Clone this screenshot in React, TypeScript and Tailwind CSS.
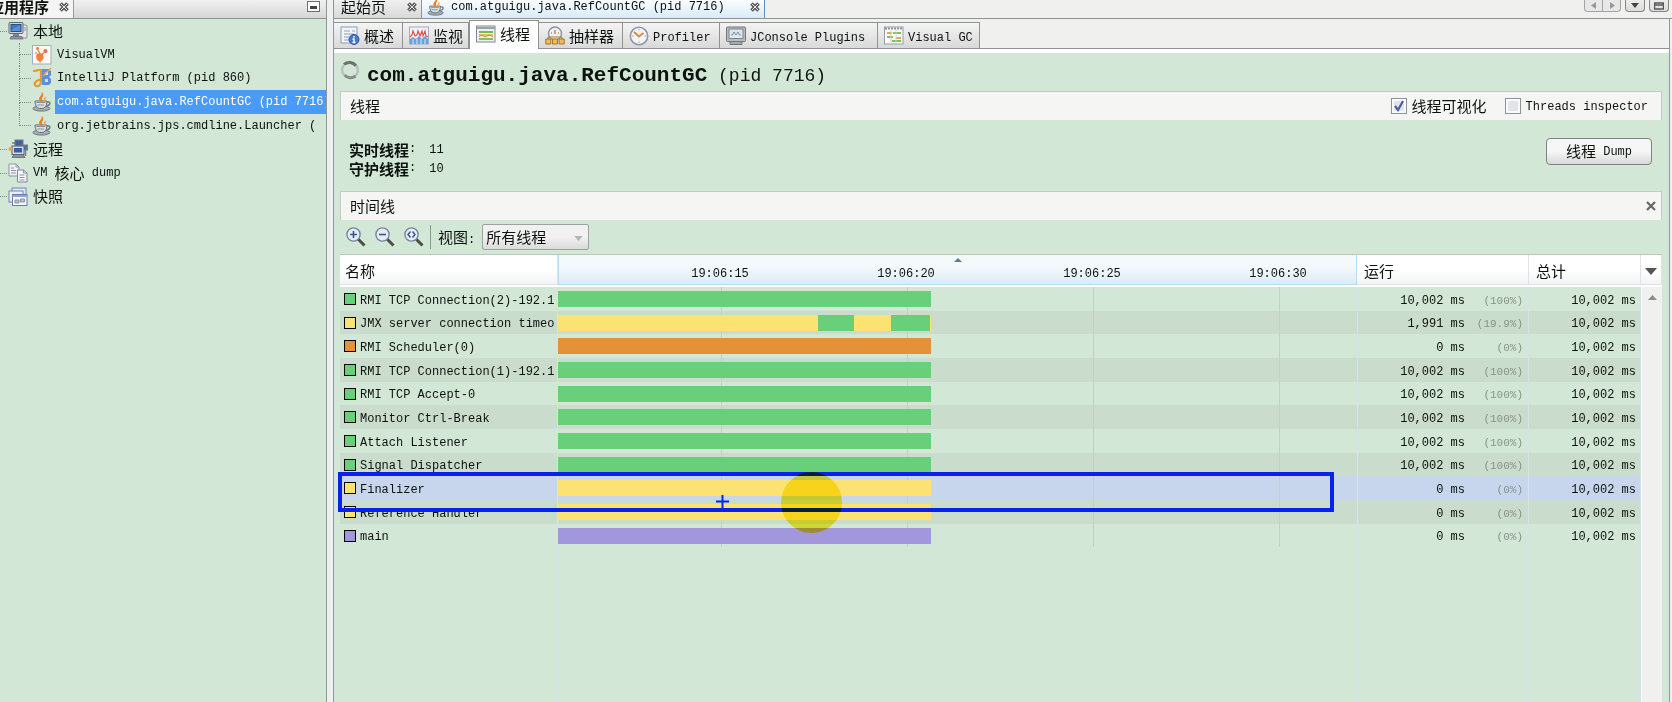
import React from "react";

const latin = "font-['Liberation_Mono','Noto_Sans_CJK_SC',monospace] text-[12px]";
const cjk = "font-['Noto_Sans_CJK_SC',sans-serif] text-[15px]";

type IconProps = { className?: string };

function Svg({ children, className = "size-5" }: IconProps & { children: React.ReactNode }) {
  return (
    <svg viewBox="0 0 20 20" fill="none" aria-hidden="true" className={`${className} shrink-0`}>
      {children}
    </svg>
  );
}

function ComputerIcon() {
  return (
    <Svg>
      <rect x="9" y="4" width="10" height="13" rx="1" fill="#e4e6ea" stroke="#8b929c" />
      <path d="M16 7h2M16 9h2" stroke="#8b929c" />
      <rect x="1" y="1.500" width="14" height="11" rx="1" fill="#c9d0d8" stroke="#5f6a78" />
      <rect x="3" y="3.500" width="10" height="7" fill="#3f78bd" stroke="#24528f" />
      <path d="M3.500 9 12 4v6H3.500z" fill="#6ea2db" opacity=".6" />
      <path d="M6 13h4l1 2H5zM3 15.500h11l1 2.500H2z" fill="#8f969f" stroke="#646b75" strokeWidth=".8" />
    </Svg>
  );
}

function VisualVmIcon() {
  return (
    <Svg>
      <rect x=".5" y=".5" width="18.500" height="18.500" fill="#fbf7f3" stroke="#a5aec4" />
      <path d="M5 9c2-1 5-1 6 1s1 4-1 5.500-5 .5-5.500-2S4 10 5 9z" fill="#f0803c" />
      <circle cx="5.500" cy="3.500" r="1.400" fill="#f0803c" />
      <circle cx="13.500" cy="6" r="2" fill="#ee6a4a" />
      <circle cx="4" cy="8" r="1.100" fill="#f4a06c" />
      <path d="m5.500 4 2.500 5M9.500 10l4-4M8 15v2.500" stroke="#ee7a3c" strokeWidth="1.300" />
    </Svg>
  );
}

function IntellijIcon() {
  return (
    <Svg>
      <path d="M10 1h7l2 2v4l-2 2 2 2v4l-2 2h-7z" fill="#5f8fdb" />
      <path d="M13 4h3v3h-3zM13 11h3v3h-3z" fill="#d6e7dc" />
      <path d="M2 3c2 0 6-2 7-1v10c0 5-2 7-5 6-3-2-1-5 5-7" stroke="#e6992f" strokeWidth="2.200" strokeLinecap="round" />
      <path d="m19 0-8 8" stroke="#e6a94a" strokeWidth="1.500" />
    </Svg>
  );
}

function JavaIcon({ className }: IconProps) {
  return (
    <Svg className={className}>
      <ellipse cx="9.500" cy="16.500" rx="8.500" ry="2.600" fill="#a4acb2" stroke="#6c777f" />
      <path d="M3 9h12c0 5-2 7.500-6 7.500S3 14 3 9z" fill="#d9dee1" stroke="#5f6b75" />
      <path d="M15 10c4-1 4 3.500-1 4" stroke="#6f7b85" strokeWidth="1.500" />
      <path d="M4.500 10.500h9M5 13h7" stroke="#8b97a0" />
      <path d="M9 10C3.500 6 11 4 9.500 0c4.500 3-1 5 1 10z" fill="#ec8222" />
      <path d="M11.500 9.500c-1-2 1.500-3 1.500-5.500 2.500 2.500-.5 3.500-.5 5.500z" fill="#f0a455" />
    </Svg>
  );
}

function RemoteIcon() {
  return (
    <Svg>
      <rect x="7" y="1" width="8" height="6" fill="#3d64a0" stroke="#757b83" />
      <rect x="13.500" y="6" width="6" height="5" fill="#5577a8" stroke="#757b83" />
      <rect x="4" y="7" width="12" height="8.500" fill="#d5d9df" stroke="#5d646e" />
      <rect x="6" y="9" width="8" height="4.500" fill="#355fa2" />
      <path d="M4 18.500h13l-2-3H6z" fill="#8b9199" stroke="#60666f" strokeWidth=".8" />
      <circle cx="2.500" cy="10" r="2" fill="#e9a53a" />
      <path d="M4 4h3M17.500 11v6" stroke="#777e87" strokeWidth="1.500" />
    </Svg>
  );
}

function DumpIcon() {
  return (
    <Svg>
      <path d="M1 1h7l3 3v9H1z" fill="#f1f2f6" stroke="#8c93a5" />
      <path d="M8 1v3h3M3 5h3M3 7.500h5M3 10h5" stroke="#8c93a5" />
      <path d="M9.500 7h6l3.500 3v9H9.500z" fill="#f5f6fa" stroke="#7f879c" />
      <path d="M15.500 7v3H19M11.500 12h5M11.500 14.500h5M11.500 17h5" stroke="#8c93a5" />
    </Svg>
  );
}

function SnapshotIcon() {
  return (
    <Svg>
      <rect x="4" y="1" width="14" height="11" fill="#dfe6f4" stroke="#7186b2" />
      <rect x="1" y="4" width="14" height="11" fill="#e9eef8" stroke="#7186b2" />
      <rect x="4.500" y="7.500" width="14.500" height="11" fill="#f6f8fc" stroke="#667ba9" />
      <path d="M4.500 9h14.500" stroke="#91a5cf" strokeWidth="2" />
      <path d="M7 16v-3h4v3zM12.500 15v-3h4v3z" fill="#b4bfd5" stroke="#8794b0" />
    </Svg>
  );
}

function OverviewIcon() {
  return (
    <Svg>
      <rect x="1" y="1" width="16" height="16" fill="#f1f4f8" stroke="#8b9bb0" />
      <path d="M4 5h6M4 8h10M4 11h5M4 14h5M12 5h3" stroke="#8fa3bf" />
      <circle cx="14" cy="13.500" r="5" fill="#4a78c8" stroke="#2c559f" />
      <path d="M14 10v1.500M12.500 13H14v3.500M12.500 16.500h3" stroke="#fff" strokeWidth="1.400" />
    </Svg>
  );
}

function MonitorIcon() {
  return (
    <Svg>
      <rect x=".5" y="1" width="19" height="17" fill="#eef3fa" stroke="#9fabc0" />
      <path d="M1 18v-5l3-2 3 2 3-3 3 3 3-3 3 3v5z" fill="#6d9fe0" />
      <path d="m1 11 2-2 1-4 2 5 2-1 1-4 2 5 2-5 1 5 2-5 1 5 2 1" stroke="#e0524a" strokeWidth="1.200" />
      <path d="M4 13v5M8 13v5M12 13v5M16 13v5" stroke="#d9e7f8" />
    </Svg>
  );
}

function ThreadsIcon() {
  return (
    <Svg>
      <rect x=".5" y="2" width="18.500" height="16" fill="#eef0ee" stroke="#7f8893" />
      <path d="M1 4h18" stroke="#98a3b2" strokeWidth="2" />
      <path d="M3 8h14" stroke="#6fbd5c" strokeWidth="2" />
      <path d="M3 11h14" stroke="#ecc14f" strokeWidth="2" />
      <path d="M3 12.500 6 11l3 2 4-2 4 1.500" stroke="#d8824a" />
      <path d="M3 15h14" stroke="#7cc46c" strokeWidth="2" />
    </Svg>
  );
}

function SamplerIcon() {
  return (
    <Svg>
      <circle cx="10" cy="7.500" r="6.500" fill="#eef1f5" stroke="#8d949e" strokeWidth="1.400" />
      <path d="M10 4v4M6 7h1M13 7h1" stroke="#c38b3c" strokeWidth="1.500" />
      <path d="M3 13v-2h14v2" stroke="#a77b30" />
      <path d="M.8 13h5v5h-5zM7.500 13h5v5h-5zM14.200 13h5v5h-5z" fill="#f0bd5c" stroke="#a77623" />
    </Svg>
  );
}

function ProfilerIcon() {
  return (
    <Svg>
      <circle cx="10" cy="10" r="8.700" fill="#f1f4f8" stroke="#8f98a5" strokeWidth="1.600" />
      <path d="M10 3v1.500M10 15.500V17M3 10h1.500M15.500 10H17" stroke="#9aa3b0" />
      <path d="m5 6 5 4.500L14.500 7" stroke="#e28b3d" strokeWidth="2" />
    </Svg>
  );
}

function JConsoleIcon() {
  return (
    <Svg>
      <rect x=".5" y="1" width="19" height="14.500" rx="1" fill="#b9bdc1" stroke="#70777e" />
      <rect x="3" y="3" width="14" height="9.500" fill="#dde6ec" stroke="#7d858d" />
      <path d="M5 9h1.500l1.500-3 2 3 2-3 1.500 3H15" stroke="#7890a4" />
      <path d="M4 15.500h12v3H4z" fill="#a5aaaf" stroke="#70777e" />
    </Svg>
  );
}

function VisualGcIcon() {
  return (
    <Svg>
      <rect x=".5" y="1" width="18.500" height="17" fill="#fbfbf8" stroke="#979da6" />
      <path d="M1 2.500h18" stroke="#8794a8" strokeWidth="2" strokeDasharray="2 1" />
      <path d="M3 7h5M12 12h5" stroke="#e7a844" strokeWidth="1.800" />
      <path d="M9 7h8M3 11h6M8 15h9" stroke="#7fc063" strokeWidth="1.800" />
      <path d="M7 4v13M12 4v13" stroke="#cfd7c9" />
    </Svg>
  );
}

function Magnifier({ kind }: { kind: "in" | "out" | "fit" }) {
  return (
    <Svg>
      <path d="m12 12 6.500 6.500" stroke="#4b4f42" strokeWidth="3" />
      <circle cx="7.500" cy="7.500" r="6.600" fill="#e6edfa" stroke="#7884a0" strokeWidth="1.400" />
      {kind === "in" && <path d="M4 7.500h7M7.500 4v7" stroke="#3f557f" strokeWidth="1.600" />}
      {kind === "out" && <path d="M4 7.500h7" stroke="#3f557f" strokeWidth="1.600" />}
      {kind === "fit" && <path d="M6.500 4.500 4 7.500l2.500 3M8.500 4.500l2.500 3-2.500 3" stroke="#3f557f" strokeWidth="1.500" />}
    </Svg>
  );
}

function BoxedCross() {
  return (
    <svg viewBox="0 0 10 10" aria-hidden="true" className="size-[10px]" fill="none">
      <path d="m1.500 1.500 7 7M8.500 1.500l-7 7" stroke="#5a5a5a" strokeWidth="3.800" />
      <path d="m2 2 6 6M8 2 2 8" stroke="#e8e8e8" strokeWidth="1" />
    </svg>
  );
}

type Part = { text: string; cjk?: boolean };
type TreeNode = { id: string; level: number; icon: React.ReactNode; parts: Part[]; selected?: boolean; last?: boolean };

const tree: TreeNode[] = [
  { id: "local", level: 0, icon: <ComputerIcon />, parts: [{ text: "本地", cjk: true }] },
  { id: "vvm", level: 1, icon: <VisualVmIcon />, parts: [{ text: "VisualVM" }] },
  { id: "idea", level: 1, icon: <IntellijIcon />, parts: [{ text: "IntelliJ Platform (pid 860)" }] },
  { id: "gc", level: 1, icon: <JavaIcon />, parts: [{ text: "com.atguigu.java.RefCountGC (pid 7716)" }], selected: true },
  { id: "jps", level: 1, icon: <JavaIcon />, parts: [{ text: "org.jetbrains.jps.cmdline.Launcher (" }], last: true },
  { id: "remote", level: 0, icon: <RemoteIcon />, parts: [{ text: "远程", cjk: true }] },
  { id: "dump", level: 0, icon: <DumpIcon />, parts: [{ text: "VM " }, { text: "核心", cjk: true }, { text: " dump" }] },
  { id: "snap", level: 0, icon: <SnapshotIcon />, parts: [{ text: "快照", cjk: true }] },
];

function Sidebar() {
  return (
    <aside className="flex w-[327px] shrink-0 flex-col overflow-hidden border-r border-[#8e9692] bg-[#d3e7d6]">
      <div className="flex h-[19px] shrink-0 items-stretch justify-between border-b border-[#8f9391] bg-linear-to-b from-[#f1f1f1] to-[#d6d6d6]">
        <div className="flex w-[74px] items-center gap-[10px] border-r border-[#9c9c9c] bg-[#f4f4f4] pb-1">
          <span className={`${cjk} -ml-[11px] leading-[14px] font-bold whitespace-nowrap`}>应用程序</span>
          <button aria-label="关闭" className="shrink-0"><BoxedCross /></button>
        </div>
        <button aria-label="最小化" className="mt-px mr-[6px] flex h-[11px] w-[13px] items-end justify-center border border-[#6f6f6f] bg-white pb-[2px]">
          <span className="h-[3px] w-[7px] bg-[#444]" />
        </button>
      </div>
      <ul>
        {tree.map((n) => (
          <li key={n.id} className="flex h-6 items-center whitespace-nowrap nth-[3n+2]:h-[23px]">
            {n.level === 0 ? (
              <span className="mr-px w-[7px] shrink-0 border-t border-dotted border-[#7d8a80]" />
            ) : (
              <span className="mr-px ml-[19px] flex w-[12px] shrink-0 flex-col self-stretch">
                <span className="flex-1 border-b border-l border-dotted border-[#7d8a80]" />
                <span className={n.last ? "flex-1" : "flex-1 border-l border-dotted border-[#7d8a80]"} />
              </span>
            )}
            {n.icon}
            <span
              className={
                n.selected
                  ? "ml-[3px] flex min-w-0 flex-1 items-center self-stretch bg-[#4a9bf9] pl-[2px] text-white"
                  : "ml-[5px] flex items-center text-[#0c120e]"
              }
            >
              {n.parts.map((p) => (
                <span key={p.text} className={`${p.cjk ? cjk : latin} whitespace-pre`}>{p.text}</span>
              ))}
            </span>
          </li>
        ))}
      </ul>
    </aside>
  );
}

const tabs = [
  { label: "概述", cjk: true, width: "w-[69px]", icon: <OverviewIcon /> },
  { label: "监视", cjk: true, width: "w-[66px]", icon: <MonitorIcon /> },
  { label: "线程", cjk: true, width: "w-[70px]", icon: <ThreadsIcon />, active: true },
  { label: "抽样器", cjk: true, width: "w-[84px]", icon: <SamplerIcon /> },
  { label: "Profiler", width: "w-[97px]", icon: <ProfilerIcon /> },
  { label: "JConsole Plugins", width: "w-[158px]", icon: <JConsoleIcon /> },
  { label: "Visual GC", width: "w-[102px]", icon: <VisualGcIcon /> },
];

const windowButton =
  "flex h-[12px] w-5 items-center justify-center rounded-b-[4px] border border-t-0 border-[#858585] bg-linear-to-b from-[#ececec] to-[#dcdcdc]";

function DocumentTabs() {
  return (
    <div className="flex h-[19px] shrink-0 items-stretch border-b border-[#8f9391] bg-[#f0f0ef]">
      <div className="flex w-[89px] items-center justify-between border-r border-l border-[#8f9391] bg-linear-to-b from-[#f0f0f0] to-[#d9d9d9] pr-1 pb-[5px] pl-[7px]">
        <button className={`${cjk} leading-[14px] whitespace-nowrap`}>起始页</button>
        <button aria-label="关闭起始页"><BoxedCross /></button>
      </div>
      <div className="flex w-[343px] items-center border-r border-[#5f8fc0] bg-linear-to-b from-[#fbfdff] to-[#d9eaf7] pr-1 pb-[4px] pl-[5px]">
        <JavaIcon className="size-[18px]" />
        <button className={`${latin} ml-[6px] flex-1 text-left leading-[14px] whitespace-nowrap`}>com.atguigu.java.RefCountGC (pid 7716)</button>
        <button aria-label="关闭"><BoxedCross /></button>
      </div>
      <div className="ml-auto flex gap-1 pr-[3px]">
        <div className="flex">
          <button aria-label="向左" className="flex h-[12px] w-[19px] items-center justify-center rounded-bl-[4px] border border-t-0 border-[#a2a2a2] bg-[#e8e8e8]">
            <svg viewBox="0 0 8 8" className="size-2"><path d="M6 0v7L1 3.500z" fill="#999" /></svg>
          </button>
          <button aria-label="向右" className="flex h-[12px] w-[18px] items-center justify-center rounded-br-[4px] border border-t-0 border-l-0 border-[#a2a2a2] bg-[#e8e8e8]">
            <svg viewBox="0 0 8 8" className="size-2"><path d="M2 0v7l5-3.500z" fill="#999" /></svg>
          </button>
        </div>
        <button aria-label="文档列表" className={windowButton}>
          <svg viewBox="0 0 8 5" className="h-[5px] w-2"><path d="M0 0h8L4 5z" fill="#444" /></svg>
        </button>
        <button aria-label="最大化" className={windowButton}>
          <svg viewBox="0 0 10 8" className="h-2 w-[10px]" fill="none"><path d="M.5 1h9v6h-9zM0 3h10" stroke="#555" strokeWidth="1.400" /></svg>
        </button>
      </div>
    </div>
  );
}

function ViewTabs() {
  return (
    <div className="flex h-[30px] shrink-0 items-end border-b border-[#8f9391] bg-[#f0f0ef]">
      {tabs.map((t) => (
        <button
          key={t.label}
          className={
            t.active
              ? `${t.width} -mb-px flex h-[29px] items-center gap-[4px] border border-b-0 border-[#8f9391] bg-white pb-[2px] pl-[6px] whitespace-nowrap`
              : `${t.width} flex h-[26px] items-center gap-[4px] border border-b-0 border-l-0 border-[#8f9391] bg-linear-to-b from-[#f4f4f4] to-[#d9d9d9] pl-[6px] whitespace-nowrap`
          }
        >
          {t.icon}
          <span className={`${t.cjk ? `${cjk} leading-5` : `${latin} pt-1 leading-5`}`}>{t.label}</span>
        </button>
      ))}
    </div>
  );
}

function CheckOption({ label, isCjk, checked }: { label: string; isCjk?: boolean; checked?: boolean }) {
  return (
    <label className="flex items-center gap-[5px]">
      <span className="relative flex size-4">
        <input
          type="checkbox"
          defaultChecked={checked}
          className="peer size-4 appearance-none border border-[#8d9399] bg-[#e1e4e8] shadow-[inset_0_0_0_2px_#fafafa]"
        />
        <svg viewBox="0 0 16 16" fill="none" className="pointer-events-none absolute inset-0 hidden peer-checked:block">
          <path d="m4 8 3 4 5-9" stroke="#4a5f9f" strokeWidth="2.200" />
        </svg>
      </span>
      <span className={`${isCjk ? cjk : `${latin} pt-[2px]`} whitespace-nowrap`}>{label}</span>
    </label>
  );
}

type Seg = { w: number; c: string };
type Thread = { name: string; swatch: string; segs: Seg[]; run: string; pct: string; selected?: boolean };

const GREEN = "#69cf78";
const YELLOW = "#fbe272";
const ORANGE = "#e39237";
const PURPLE = "#a296dc";
const TOTAL = "10,002 ms";
const SPAN = 373;

const solid = (name: string, c: string, run = TOTAL, pct = "(100%)"): Thread => ({ name, swatch: c, segs: [{ w: SPAN, c }], run, pct });

const threads: Thread[] = [
  solid("RMI TCP Connection(2)-192.1", GREEN),
  {
    name: "JMX server connection timeo",
    swatch: YELLOW,
    segs: [{ w: 260, c: YELLOW }, { w: 36, c: GREEN }, { w: 37, c: YELLOW }, { w: 39, c: GREEN }, { w: 1, c: YELLOW }],
    run: "1,991 ms",
    pct: "(19.9%)",
  },
  solid("RMI Scheduler(0)", ORANGE, "0 ms", "(0%)"),
  solid("RMI TCP Connection(1)-192.1", GREEN),
  solid("RMI TCP Accept-0", GREEN),
  solid("Monitor Ctrl-Break", GREEN),
  solid("Attach Listener", GREEN),
  solid("Signal Dispatcher", GREEN),
  { ...solid("Finalizer", YELLOW, "0 ms", "(0%)"), selected: true },
  solid("Reference Handler", YELLOW, "0 ms", "(0%)"),
  solid("main", PURPLE, "0 ms", "(0%)"),
];

const ticks = ["19:06:15", "19:06:20", "19:06:25", "19:06:30"];

const headCell = "border-r border-b border-[#dfe3e6] bg-linear-to-b from-white from-50% to-[#f3f4f6] p-0 text-left font-normal";

function ThreadTable() {
  return (
    <div className="relative mr-[7px] ml-[6px] flex-1">
      <table className={`${latin} h-full w-full table-fixed border-separate border-spacing-0 border-t border-[#bcc6bd] text-[#0c120e]`}>
        <colgroup>
          <col className="w-[218px]" />
          <col />
          <col className="w-[172px]" />
          <col className="w-[112px]" />
          <col className="w-[21px]" />
        </colgroup>
        <thead>
          <tr className="h-[30px]">
            <th className={`${headCell} ${cjk} pt-1 pl-[5px]`}>名称</th>
            <th className="relative overflow-hidden border-r border-b border-l border-[#b5def5] bg-linear-to-b from-[#f4f9fc] from-40% to-[#dcebf6] p-0 font-normal">
              <svg viewBox="0 0 8 4" className="absolute top-[3px] left-1/2 -ml-1 h-1 w-2"><path d="M0 4h8L4 0z" fill="#55809a" /></svg>
              <div className="flex overflow-hidden pt-2 pl-[68px]">
                {ticks.map((t) => (
                  <span key={t} className="w-[186px] shrink-0 text-center">{t}</span>
                ))}
              </div>
            </th>
            <th className={`${headCell} ${cjk} pt-1 pl-[7px]`}>运行</th>
            <th className={`${headCell} ${cjk} pt-1 pl-[7px]`}>总计</th>
            <th className={headCell}>
              <button aria-label="选择列" className="flex w-full justify-center pt-1">
                <svg viewBox="0 0 12 7" className="h-[7px] w-3"><path d="M0 0h12L6 7z" fill="#555" /></svg>
              </button>
            </th>
          </tr>
        </thead>
        <tbody>
          <tr className="h-[2px]">
            <td colSpan={5} className="bg-white p-0" />
          </tr>
          {threads.map((t, i) => {
            const bg = t.selected ? "bg-[#c7d6ec]" : i % 2 ? "bg-[#cadccb]" : "bg-[#d3e7d6]";
            return (
              <tr key={t.name} className={`${bg} h-6 nth-[3n]:h-[23px]`}>
                <td className="border-r border-[#d6e2ea] p-0">
                  <div className="flex items-center gap-[4px] overflow-hidden pl-1 leading-5 whitespace-nowrap">
                    <span className="size-3 shrink-0 border border-black" style={{ backgroundColor: t.swatch }} />
                    <span className="pt-[3px]">{t.name}</span>
                  </div>
                </td>
                <td className="relative overflow-hidden p-0">
                  <div className="absolute inset-0 flex overflow-hidden pl-[70px]">
                    {ticks.map((k) => (
                      <span key={k} className="flex w-[186px] shrink-0 justify-center">
                        <span className="w-px bg-[#c3d1c5]" />
                      </span>
                    ))}
                  </div>
                  <div className="relative flex h-4">
                    {t.segs.map((s, j) => (
                      <span key={j} style={{ width: s.w, backgroundColor: s.c }} />
                    ))}
                  </div>
                </td>
                <td className="border-x border-[#d6e2ea] p-0">
                  <div className="flex items-center justify-end pt-[3px] pr-[5px] leading-5">
                    <span>{t.run}</span>
                    <span className="w-[58px] text-right text-[11px] text-[#87938a]">{t.pct}</span>
                  </div>
                </td>
                <td className="border-r border-[#d6e2ea] p-0 pt-[3px] pr-1 text-right leading-5">{TOTAL}</td>
                {i === 0 && (
                  <td rowSpan={threads.length + 1} className="border-l border-white bg-[#f0f0ef] p-0 align-top">
                    <button aria-label="向上滚动" className="flex w-full justify-center pt-2">
                      <svg viewBox="0 0 9 5" className="h-[5px] w-[9px]"><path d="M0 5h9L4.500 0z" fill="#8c8c8c" /></svg>
                    </button>
                  </td>
                )}
              </tr>
            );
          })}
          <tr>
            <td className="border-r border-[#d6e2ea] p-0" />
            <td className="p-0" />
            <td className="border-x border-[#d6e2ea] p-0" />
            <td className="border-r border-[#d6e2ea] p-0" />
          </tr>
        </tbody>
      </table>
      <div className="pointer-events-none absolute top-[218px] -left-[2px] h-[40px] w-[996px] border-4 border-[#0722ec]" />
      <svg viewBox="0 0 13 13" className="pointer-events-none absolute top-[241px] left-[376px] size-[13px]">
        <path d="M6.500 0v13M0 6.500h13" stroke="#0722ec" strokeWidth="2" />
      </svg>
      <div className="pointer-events-none absolute top-[218px] left-[441px] size-[61px] rounded-full bg-[#fbee3e] mix-blend-multiply" />
    </div>
  );
}

const sectionBar = "mr-[7px] ml-[6px] flex h-[29px] shrink-0 items-center border border-b-0 border-[#c3ccc4] bg-[#f5f5f4] pl-[9px]";

export default function App() {
  return (
    <div className={`${latin} flex h-screen min-h-[560px] overflow-hidden bg-[#eef0ef] text-[#0c120e]`}>
      <Sidebar />
      <main className="ml-[6px] flex min-w-0 flex-1 flex-col">
        <DocumentTabs />
        <div className="mr-[2px] flex min-h-0 flex-1 flex-col border-x border-[#8f9aa0] bg-[#d3e7d6]">
          <ViewTabs />
          <div className="h-1 shrink-0 bg-white" />
          <h1 className="flex h-[38px] shrink-0 items-center pl-[6px] whitespace-pre">
            <svg viewBox="0 0 20 20" fill="none" className="mb-1 size-5">
              <path d="M4 4.500a8 8 0 0 1 12 1.500" stroke="#6d716d" strokeWidth="3" />
              <path d="M16.500 5.500a8 8 0 0 1-2 11" stroke="#b9bfba" strokeWidth="2.500" />
              <path d="M15.500 16a8 8 0 0 1-11-1" stroke="#878c88" strokeWidth="3" />
              <path d="M4 15a8 8 0 0 1 0-10" stroke="#b9bfba" strokeWidth="2.500" />
            </svg>
            <span className="ml-[7px] flex items-baseline pt-2">
              <span className="text-[21px] font-bold">com.atguigu.java.RefCountGC</span>
              <span className="text-[18px]"> (pid 7716)</span>
            </span>
          </h1>
          <section className={sectionBar}>
            <h2 className={cjk}>线程</h2>
            <div className="ml-auto flex gap-[18px] pr-[13px]">
              <CheckOption label="线程可视化" isCjk checked />
              <CheckOption label="Threads inspector" />
            </div>
          </section>
          <div className="flex h-[71px] shrink-0 items-start justify-between pr-[17px] pl-[15px]">
            <dl className="pt-[20px]">
              {[["实时线程", "11"], ["守护线程", "10"]].map(([k, v]) => (
                <div key={k} className="flex h-[19px] items-center">
                  <dt className={`${cjk} flex items-center leading-[19px] font-bold`}>{k}<span className={`${latin} font-normal`}>:</span></dt>
                  <dd className="pl-[13px]">{v}</dd>
                </div>
              ))}
            </dl>
            <button className="mt-[18px] flex h-[27px] w-[106px] items-center justify-center rounded-[4px] border border-[#7f8481] bg-linear-to-b from-[#f6f6f6] from-50% to-[#d8d8d8]">
              <span className={cjk}>线程</span>
              <span className="whitespace-pre"> Dump</span>
            </button>
          </div>
          <section className={`${sectionBar} justify-between pr-[5px]`}>
            <h2 className={cjk}>时间线</h2>
            <button aria-label="关闭时间线">
              <svg viewBox="0 0 10 10" className="size-[10px]"><path d="m1 1 8 8M9 1 1 9" stroke="#666" strokeWidth="2.200" /></svg>
            </button>
          </section>
          <div className="flex h-[34px] shrink-0 items-center pl-[12px]">
            <div className="flex gap-[9px] pb-px">
              <button aria-label="放大"><Magnifier kind="in" /></button>
              <button aria-label="缩小"><Magnifier kind="out" /></button>
              <button aria-label="适合窗口"><Magnifier kind="fit" /></button>
            </div>
            <span className="ml-[6px] h-6 w-px bg-[#8d9a90]" />
            <label htmlFor="view" className={`${cjk} ml-[7px]`}>视图<span className={latin}>:</span></label>
            <div className="relative ml-[7px] grid">
              <select id="view" className={`${cjk} h-[26px] w-[107px] appearance-none rounded-[2px] border border-[#9aa39c] bg-linear-to-b from-[#f1f1f1] from-50% to-[#dadada] pl-[3px] leading-5`}>
                <option>所有线程</option>
              </select>
              <svg viewBox="0 0 10 6" className="pointer-events-none absolute top-[12px] right-[6px] h-[5px] w-[9px]"><path d="M0 0h10L5 6z" fill="#b1b6b2" /></svg>
            </div>
          </div>
          <ThreadTable />
        </div>
      </main>
    </div>
  );
}
